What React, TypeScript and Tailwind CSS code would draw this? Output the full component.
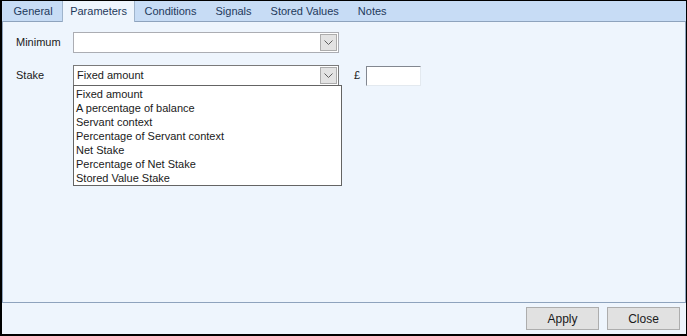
import React from "react";

const font = { fontFamily: '"Liberation Sans", Arial, sans-serif' };

function Chevron() {
  return (
    <svg width="9" height="6" viewBox="0 0 9 6" className="block">
      <path d="M0.5 0.5 L4.5 4.5 L8.5 0.5" fill="none" stroke="#606060" strokeWidth="1" />
    </svg>
  );
}

function DropBtn() {
  return (
    <div className="ml-auto mr-[1px] w-[17px] h-[17px] flex items-center justify-center border border-[#acacac] bg-[#e3e3e3] shrink-0">
      <Chevron />
    </div>
  );
}

export default function App() {
  const tabs = ["General", "Parameters", "Conditions", "Signals", "Stored Values", "Notes"];
  const items = [
    "Fixed amount",
    "A percentage of balance",
    "Servant context",
    "Percentage of Servant context",
    "Net Stake",
    "Percentage of Net Stake",
    "Stored Value Stake",
  ];
  return (
    <div
      className="w-[687px] h-[336px] bg-[#eef5fd] border-black border-l-2 border-t border-r border-b-2 flex flex-col text-[11px] text-[#1a1a1a] overflow-hidden"
      style={font}
    >
      {/* tab strip */}
      <div className="h-[20px] bg-[#c7dcf5] flex items-end pl-[2px] shrink-0">
        {tabs.map((t, i) =>
          i === 1 ? (
            <div
              key={t}
              className="relative z-10 h-[21px] -mb-[1px] px-[7px] flex items-center bg-[#eef5fd] border-l border-r border-[#9fb4cc] text-[#1e395b]"
            >
              {t}
            </div>
          ) : (
            <div key={t} className="h-[20px] px-[9.5px] flex items-center text-[#1e395b]">
              {t}
            </div>
          )
        )}
      </div>
      {/* panel */}
      <div className="h-[282px] border border-[#8ea3bd] shrink-0 flex flex-col gap-[12px] pt-[10px] pl-[13px]">
        <div className="flex items-center h-[21px]">
          <div className="w-[57px]">Minimum</div>
          <div className="w-[266px] h-[21px] bg-white border border-[#abadb3] flex items-center">
            <DropBtn />
          </div>
        </div>
        <div className="flex items-center h-[21px]">
          <div className="w-[57px]">Stake</div>
          <div className="relative w-[266px] h-[21px] bg-white border border-[#7a7a7a] flex items-center pl-[3px]">
            <span>Fixed amount</span>
            <DropBtn />
            <div className="absolute z-20 -left-[1px] top-[19px] w-[269px] h-[101px] bg-white border border-[#646464] pl-[2px] pt-[1px]">
              {items.map((it) => (
                <div key={it} className="h-[14px] leading-[14px]">
                  {it}
                </div>
              ))}
            </div>
          </div>
          <div className="ml-[15px] w-[12px]">£</div>
          <div className="w-[55px] h-[20px] bg-white border border-t-[#828790] border-l-[#828790] border-r-[#e3e9ef] border-b-[#e3e9ef]" />
        </div>
      </div>
      {/* footer */}
      <div className="flex-1 flex justify-end items-start pt-[4px] pr-[6px] gap-[8px]">
        <button className="w-[73px] h-[23px] bg-[#e1e1e1] border border-[#adadad] text-[#1a1a1a] text-[12px]">Apply</button>
        <button className="w-[73px] h-[23px] bg-[#e1e1e1] border border-[#adadad] text-[#1a1a1a] text-[12px]">Close</button>
      </div>
    </div>
  );
}
